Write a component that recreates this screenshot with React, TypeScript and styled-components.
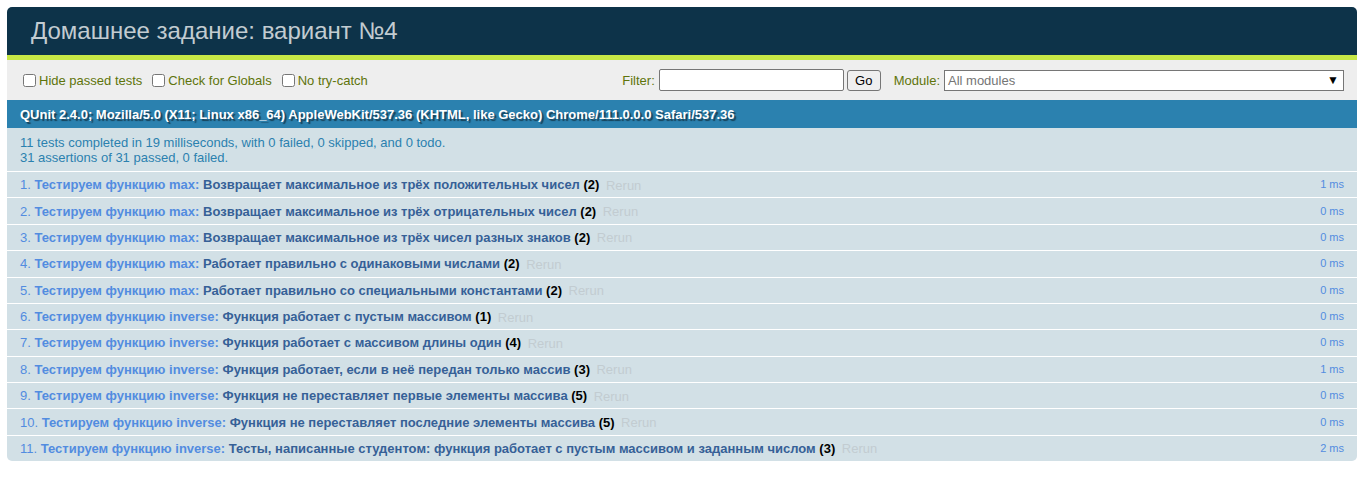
import React from 'react';
import styled, {createGlobalStyle} from "styled-components";

const GlobalStyle = createGlobalStyle`
  body {
    margin: 7px 8px 8px 7px;
    font-family: "Liberation Sans", Arial, sans-serif;
    background: #fff;
  }
`;

type TestRow = {
    module: string;
    name: string;
    count: number;
    time: number;
};

const tests: TestRow[] = [
    {module: "Тестируем функцию max", name: "Возвращает максимальное из трёх положительных чисел", count: 2, time: 1},
    {module: "Тестируем функцию max", name: "Возвращает максимальное из трёх отрицательных чисел", count: 2, time: 0},
    {module: "Тестируем функцию max", name: "Возвращает максимальное из трёх чисел разных знаков", count: 2, time: 0},
    {module: "Тестируем функцию max", name: "Работает правильно с одинаковыми числами", count: 2, time: 0},
    {module: "Тестируем функцию max", name: "Работает правильно со специальными константами", count: 2, time: 0},
    {module: "Тестируем функцию inverse", name: "Функция работает с пустым массивом", count: 1, time: 0},
    {module: "Тестируем функцию inverse", name: "Функция работает с массивом длины один", count: 4, time: 0},
    {module: "Тестируем функцию inverse", name: "Функция работает, если в неё передан только массив", count: 3, time: 1},
    {module: "Тестируем функцию inverse", name: "Функция не переставляет первые элементы массива", count: 5, time: 0},
    {module: "Тестируем функцию inverse", name: "Функция не переставляет последние элементы массива", count: 5, time: 0},
    {module: "Тестируем функцию inverse", name: "Тесты, написанные студентом: функция работает с пустым массивом и заданным числом", count: 3, time: 2},
];

function App(): JSX.Element {
    return (
        <Runner>
            <GlobalStyle/>
            <Header>Домашнее задание: вариант №4</Header>
            <Banner/>
            <Toolbar>
                <Options>
                    <Option><input type="checkbox"/>Hide passed tests</Option>
                    <Option><input type="checkbox"/>Check for Globals</Option>
                    <Option><input type="checkbox"/>No try-catch</Option>
                </Options>
                <Filters>
                    <FilterLabel>Filter:</FilterLabel>
                    <FilterInput type="text"/>
                    <GoButton>Go</GoButton>
                    <FilterLabel>Module:</FilterLabel>
                    <ModuleSelect>
                        <span>All modules</span>
                        <Arrow>▼</Arrow>
                    </ModuleSelect>
                </Filters>
            </Toolbar>
            <UserAgent>
                QUnit 2.4.0; Mozilla/5.0 (X11; Linux x86_64) AppleWebKit/537.36 (KHTML, like Gecko) Chrome/111.0.0.0 Safari/537.36
            </UserAgent>
            <TestResult>
                11 tests completed in 19 milliseconds, with 0 failed, 0 skipped, and 0 todo.<br/>
                31 assertions of 31 passed, 0 failed.
            </TestResult>
            <Tests>
                {tests.map((t, i) => (
                    <Test key={i}>
                        <Runtime>{t.time} ms</Runtime>
                        {i + 1}.{" "}
                        <Title>
                            <span>{t.module}:</span>{" "}
                            <TestName>{t.name}</TestName>{" "}
                            <Counts>({t.count})</Counts>
                        </Title>
                        <Rerun href="#">Rerun</Rerun>
                    </Test>
                ))}
            </Tests>
        </Runner>
    );
}

const Runner = styled.div`
  font-family: "Liberation Sans", Arial, sans-serif;
`;

const Header = styled.h1`
  margin: 0;
  padding: 12px 0 12px 24px;
  font-size: 24px;
  line-height: 24px;
  font-weight: 400;
  color: #c2ccd1;
  background: #0d3349;
  border-radius: 5px 5px 0 0;
`;

const Banner = styled.div`
  height: 5px;
  background: #c6e746;
`;

const Toolbar = styled.div`
  display: flex;
  align-items: center;
  justify-content: space-between;
  height: 40px;
  box-sizing: border-box;
  padding: 0 13px 0 16px;
  font-size: 13px;
  color: #5e740b;
  background: #eee;
`;

const Options = styled.div`
  display: flex;
  align-items: center;
  gap: 10px;
  padding-top: 1px;
`;

const Option = styled.label`
  display: flex;
  align-items: center;

  input {
    margin: 0 3px 0 0;
    width: 13px;
    height: 13px;
  }
`;

const Filters = styled.div`
  display: flex;
  align-items: center;
`;

const FilterLabel = styled.label`
  margin-right: 4px;
  margin-left: 13px;
`;

const FilterInput = styled.input`
  box-sizing: border-box;
  width: 185px;
  height: 22px;
  margin: 0;
  border: 1px solid #767676;
  border-radius: 2px;
  background: #fff;
`;

const GoButton = styled.button`
  box-sizing: border-box;
  height: 21px;
  width: 34px;
  margin-left: 3px;
  padding: 0;
  font-family: "Liberation Sans", Arial, sans-serif;
  font-size: 13px;
  color: #000;
  background: #efefef;
  border: 1px solid #767676;
  border-radius: 3px;
`;

const ModuleSelect = styled.div`
  box-sizing: border-box;
  display: flex;
  align-items: center;
  justify-content: space-between;
  width: 400px;
  height: 21px;
  padding: 0 4px 0 3px;
  font-size: 13px;
  color: #757575;
  background: #fff;
  border: 1px solid #767676;
`;

const Arrow = styled.span`
  color: #000;
  font-size: 12px;
`;

const UserAgent = styled.h2`
  margin: 0;
  padding: 7px 13px 5px;
  font-size: 13px;
  line-height: 16px;
  font-weight: 700;
  color: #fff;
  background: #2b81af;
  text-shadow: rgba(0, 0, 0, 0.5) 2px 2px 1px;
`;

const TestResult = styled.div`
  padding: 7px 13px 6px;
  font-size: 13px;
  line-height: 15px;
  color: #2b81af;
  background: #d2e0e6;
  border-bottom: 1px solid #fff;
`;

const Tests = styled.ol`
  margin: 0;
  padding: 0;
  list-style: none;
`;

const Test = styled.li`
  padding: 5.2px 13px;
  font-size: 13px;
  color: #528ce0;
  background: #d2e0e6;
  border-bottom: 1px solid #fff;

  &:last-child {
    border-bottom: 0;
    border-radius: 0 0 5px 5px;
  }
`;

const Title = styled.strong`
  cursor: pointer;
`;

const TestName = styled.span`
  color: #366097;
`;

const Counts = styled.b`
  color: #000;
`;

const Rerun = styled.a`
  padding: 6.5px;
  color: #c2ccd1;
  text-decoration: none;
`;

const Runtime = styled.span`
  float: right;
  font-size: 11px;
  line-height: 15px;
`;

export default App;
